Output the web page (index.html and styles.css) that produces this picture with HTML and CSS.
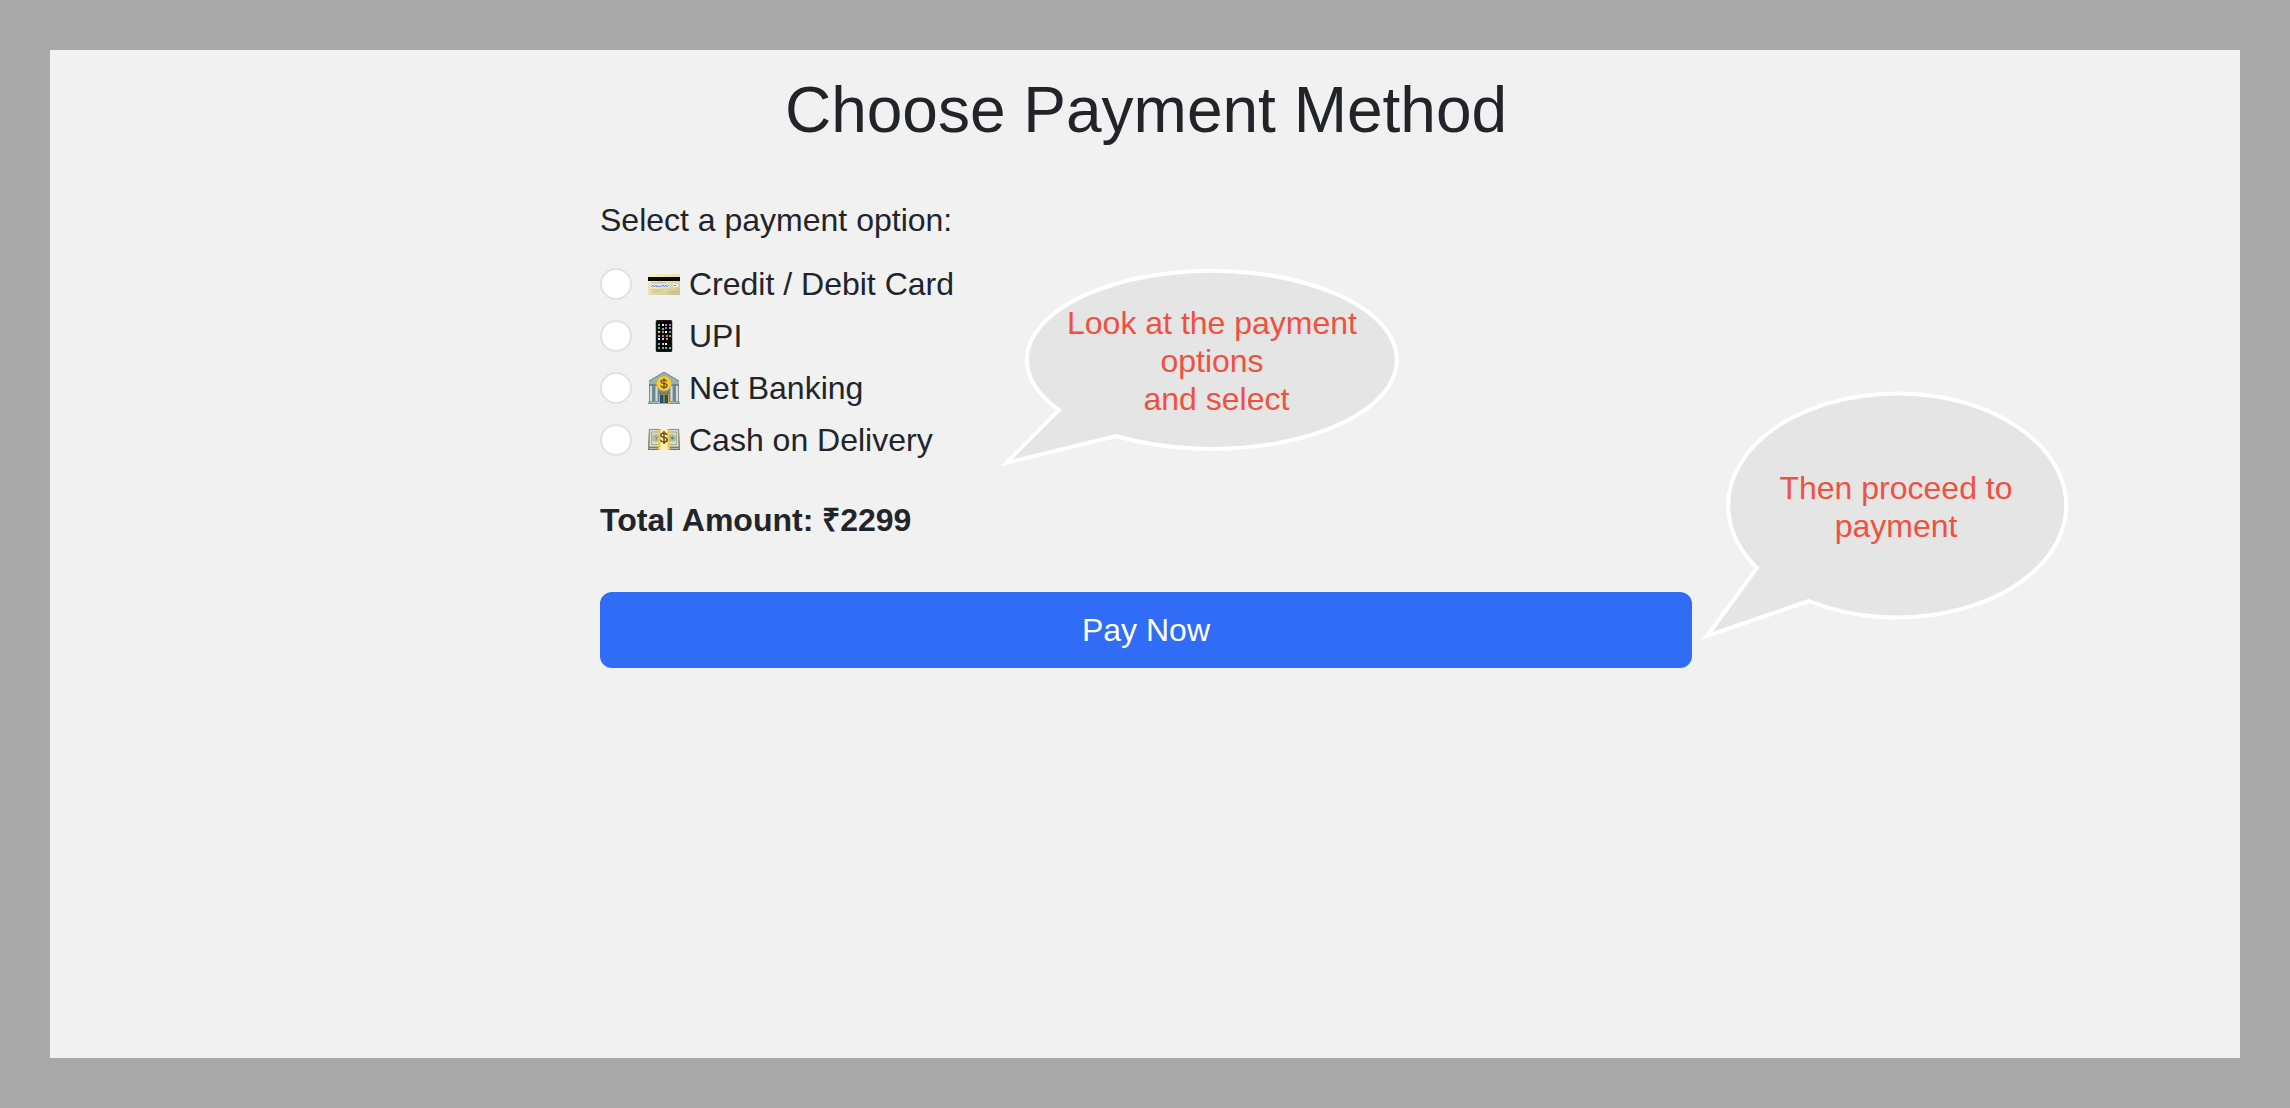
FILE: index.html
```html
<!DOCTYPE html>
<html lang="en">
<head>
<meta charset="utf-8">
<meta name="viewport" content="width=device-width, initial-scale=1">
<title>Choose Payment Method</title>
<link rel="stylesheet" href="styles.css">
</head>
<body>
<main class="panel">
  <div class="container">
    <h1 class="title">Choose Payment Method</h1>
    <form class="payment">
      <fieldset class="options">
        <legend class="legend">Select a payment option:</legend>
        <div class="option">
          <input class="radio" type="radio" name="method" id="card">
          <label class="label" for="card">
            <svg class="icon" viewBox="0 0 32 32" aria-hidden="true">
              <defs>
                <linearGradient id="gold" x1="0" y1="0" x2="1" y2="1">
                  <stop offset="0" stop-color="#f8f2c8"/><stop offset=".5" stop-color="#e8dfae"/><stop offset="1" stop-color="#c9bd86"/>
                </linearGradient>
              </defs>
              <rect y="6" width="32" height="21" rx="1" fill="url(#gold)"/>
              <rect y="9" width="32" height="4" fill="#080808"/>
              <path d="M3 14.700h15" stroke="#aaa37f" stroke-width=".6"/>
              <rect x="2" y="16" width="20" height="4" fill="#e5e7eb"/>
              <path d="M3 19l2-2 1 2 2-2 1 2 2-1 1 1 3-2 1 2 2-2 1 2 2-2" fill="none" stroke="#4d7fd0" stroke-width=".8"/>
              <rect x="25" y="16" width="5" height="3" fill="#fff"/>
              <path d="M25.500 17.500h3" stroke="#555" stroke-width=".8"/>
              <path d="M3 22h12M3 24h8M20 24h8" stroke="#b7ad7e" stroke-width=".6"/>
            </svg>
            <span>Credit / Debit Card</span>
          </label>
        </div>
        <div class="option">
          <input class="radio" type="radio" name="method" id="upi">
          <label class="label" for="upi">
            <svg class="icon" viewBox="0 0 32 32" aria-hidden="true">
              <rect x="8" y="0" width="16" height="32" rx="1.500" fill="#050505" stroke="#444" stroke-width=".6"/>
              <g fill="none" stroke-width="2">
                <path d="M10 5h2M18 19h2M10 28h2M17 28h2" stroke="#44d15a"/>
                <path d="M14 5h2M10 19h2M14 24h2M17 12h2" stroke="#eee"/>
                <path d="M17 5h2M14 16h2M18 16h2" stroke="#d55be0"/>
                <path d="M21 5h2M21 12h2M17 8h2" stroke="#8d8d8d"/>
                <path d="M10 8h2M14 9h2M21 8h2M10 16h2M10 24h2M14 28h2M21 28h2" stroke="#43b9ee"/>
                <path d="M10 12h2M14 19h2" stroke="#f1cf3e"/>
                <path d="M14 12h2M21 16h2M14 24h1" stroke="#f48732"/>
                <path d="M17 24h2" stroke="#fff"/>
              </g>
            </svg>
            <span>UPI</span>
          </label>
        </div>
        <div class="option">
          <input class="radio" type="radio" name="method" id="bank">
          <label class="label" for="bank">
            <svg class="icon" viewBox="0 0 32 32" aria-hidden="true">
              <path d="M1 9L16 0l15 9v4H1z" fill="#9caeb5"/>
              <path d="M1 9L16 0l15 9M1 12.500h30" fill="none" stroke="#70868f"/>
              <path d="M1 13h30v17H1z" fill="#6f858e"/>
              <path d="M3 14v15M8.500 14v15M23.500 14v15M29 14v15" stroke="#cfdadc" stroke-width="2.200"/>
              <path d="M0 29.500h10v2.500H0zM22 29.500h10v2.500H22z" fill="#a3b1b5"/>
              <path d="M0 31.500h32" stroke="#778b92" stroke-width=".8"/>
              <rect x="11" y="21" width="10" height="10" fill="#254f70"/>
              <path d="M11.500 31V22h9v9M16 22v9" fill="none" stroke="#d5aa35"/>
              <circle cx="16" cy="11.500" r="7.500" fill="#f4cf38" stroke="#dca924" stroke-width=".8"/>
              <path d="M19 9.500q-1-1.700-3-1.700c-4 0-4 3.500 0 3.700 4.300.2 4 4-.1 4q-2.400 0-3.200-1.900M16 6.300v10.800" fill="none" stroke="#66531a" stroke-width="1.300"/>
            </svg>
            <span>Net Banking</span>
          </label>
        </div>
        <div class="option">
          <input class="radio" type="radio" name="method" id="cash">
          <label class="label" for="cash">
            <svg class="icon" viewBox="0 0 32 32" aria-hidden="true">
              <path d="M1 5h30l1 21H0z" fill="#74745f"/>
              <path d="M1.500 5.500h29l.5 17.500H1z" fill="#dddcc5" stroke="#8c8d76"/>
              <path d="M1 24.500h30" stroke="#d8d7be" stroke-width=".7"/>
              <path d="M3.500 8h25v12.500h-25z" fill="none" stroke="#9d9e87" stroke-width=".8"/>
              <circle cx="8" cy="14" r="4" fill="#b9bba6"/>
              <circle cx="24" cy="14" r="4" fill="#b5bea9"/>
              <circle cx="24.500" cy="14" r="1.500" fill="#469263"/>
              <path d="M7 12.500l2 1-1 2" fill="none" stroke="#777c70" stroke-width=".8"/>
              <path d="M11 5h10l1 21H10z" fill="#f1c73d"/>
              <path d="M13 5h6l.7 21h-7.400z" fill="#fff0b5"/>
              <path d="M19 11q-1-2-3-2c-4.300 0-4 4 0 4.400 4.500.4 4 4.600-.1 4.600q-2.500 0-3.400-2.300M16 7v13" fill="none" stroke="#604b17" stroke-width="1.400"/>
            </svg>
            <span>Cash on Delivery</span>
          </label>
        </div>
      </fieldset>
      <p class="total">Total Amount: ₹2299</p>
      <button class="pay" type="button">Pay Now</button>
    </form>
    <aside class="bubble bubble-options">
      <svg class="shape" viewBox="0 0 400 220" aria-hidden="true">
        <path d="M60 150A185 89 0 1 1 117 176L7 203Z"/>
      </svg>
      <p class="hint">Look at the payment<br>options<br>&nbsp;and select</p>
    </aside>
    <aside class="bubble bubble-proceed">
      <svg class="shape" viewBox="0 0 370 260" aria-hidden="true">
        <path d="M57 188A169 112 0 1 1 109 221L7 256Z"/>
      </svg>
      <p class="hint">Then proceed to<br>payment</p>
    </aside>
  </div>
</main>
</body>
</html>
```

FILE: styles.css
```css
* {
  box-sizing: border-box;
}

body {
  margin: 0;
  padding: 50px;
  min-height: 100vh;
  display: flex;
  background: #a9a9a9;
  color: #212529;
  font: 32px/48px "Liberation Sans", Arial, sans-serif;
}

.panel {
  flex: 1;
  background: #f1f1f1;
}

.container {
  position: relative;
  max-width: 1140px;
  margin: 0 auto;
  padding: 22px 23px 22px 25px;
}

.title {
  margin: 0 0 48px;
  font-size: 64px;
  font-weight: 400;
  line-height: 76px;
  text-align: center;
}

.options {
  margin: 0;
  padding: 0;
  border: 0;
}

.legend {
  padding: 0;
  margin-bottom: 16px;
}

.option {
  display: flex;
  align-items: center;
  gap: 16px;
  margin-bottom: 4px;
}

.radio {
  appearance: none;
  width: 32px;
  height: 32px;
  margin: 0;
  border: 2px solid #dee2e6;
  border-radius: 50%;
  background: #fff;
}

.radio:checked {
  border: 10px solid #306cf5;
}

.label {
  display: flex;
  align-items: center;
  gap: 9px;
}

.icon {
  width: 32px;
  height: 32px;
}

.total {
  margin: 28px 0 48px;
  font-weight: 700;
}

.pay {
  display: block;
  width: 100%;
  padding: 14px 24px;
  border: 0;
  border-radius: 12px;
  background: #306cf5;
  color: #fff;
  font: inherit;
}

.bubble {
  position: absolute;
  color: #ef5141;
}

.bubble-options {
  top: 210px;
  left: 424px;
  width: 400px;
}

.bubble-proceed {
  top: 330px;
  left: 1125px;
  width: 370px;
}

.shape {
  display: block;
  width: 100%;
  fill: #e5e5e5;
  stroke: #fff;
  stroke-width: 4px;
}

.hint {
  position: absolute;
  inset: 0;
  display: flex;
  align-items: center;
  justify-content: center;
  margin: 0;
  line-height: 38px;
  text-align: center;
}

.bubble-options .hint {
  inset: 12px 0 30px 26px;
}

.bubble-proceed .hint {
  inset: 15px 5px 21px 27px;
}
```
